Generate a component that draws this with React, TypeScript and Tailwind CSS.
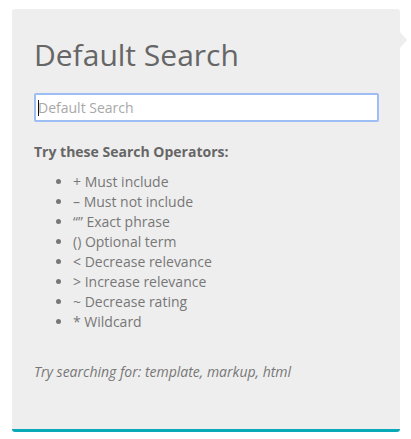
import React from 'react';

const operators = [
  '+ Must include',
  '– Must not include',
  '“” Exact phrase',
  '() Optional term',
  '< Decrease relevance',
  '> Increase relevance',
  '~ Decrease rating',
  '* Wildcard',
];

export default function App() {
  return (
    <div className="min-h-[439px] bg-white pt-[9px] pl-[12px]" style={{ fontFamily: '"Open Sans", "Noto Sans", sans-serif' }}>
      <div className="relative w-[388px] rounded-[3px] border-b-[3px] border-[#0aa9b8] bg-[#eeeeee] px-[22px] pt-[28px] pb-[47px]">
        {/* pointer arrow */}
        <div className="absolute -right-[7px] top-[23px] h-0 w-0 border-y-[8px] border-l-[7px] border-y-transparent border-l-[#eeeeee]" />

        <h1 className="text-[30px] leading-[36px] font-normal text-[#666666]">Default Search</h1>

        <div className="relative mt-[20px] w-[345px]">
          <input
            type="text"
            placeholder="Default Search"
            className="h-[29px] w-full rounded-[2px] border-2 border-[#9dbdf5] bg-white px-[2px] text-[14px] text-[#555] outline-none placeholder:text-[#a8a8a8]"
          />
          <span className="absolute left-[4px] top-[7px] h-[16px] w-px bg-[#111]" />
        </div>

        <p className="mt-[20px] text-[14px] leading-[20px] font-bold text-[#666666]">Try these Search Operators:</p>

        <ul className="mt-[10px] list-disc pl-[39px] text-[14px] leading-[20px] text-[#777777] marker:text-[#777777]">
          {operators.map(op => (
            <li key={op}>{op}</li>
          ))}
        </ul>

        <p className="mt-[30px] text-[14px] leading-[20px] italic text-[#777777]">
          Try searching for: template, markup, html
        </p>
      </div>
    </div>
  );
}
